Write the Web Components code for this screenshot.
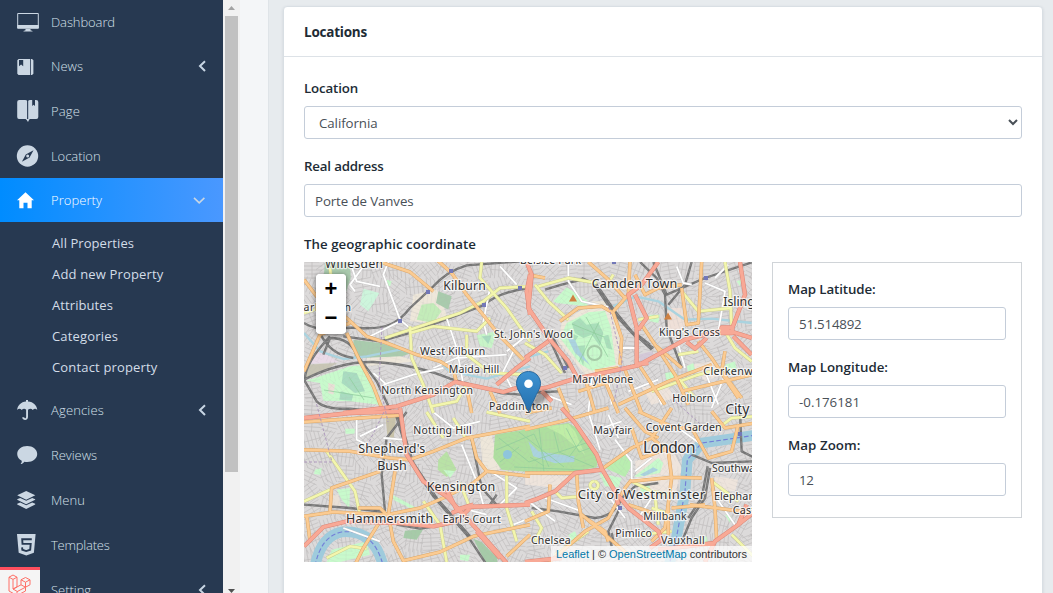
<!DOCTYPE html>
<html lang="en">
<head>
<meta charset="utf-8">
<title>Property</title>
<style>
html,body{margin:0;height:100%;overflow:hidden}
body{font:14px "Open Sans","Noto Sans",sans-serif;background:#e7ebee;color:#212b35}
</style>
</head>
<body>
<admin-app>
  <side-nav slot="nav">
    <nav-item icon="monitor" label="Dashboard" w="64" style="--h:44px"></nav-item>
    <nav-item icon="news" label="News" w="32" arrow="left" style="--h:44px"></nav-item>
    <nav-item icon="book" label="Page" w="29" style="--h:46px"></nav-item>
    <nav-item icon="compass" label="Location" w="49.5" style="--h:44px"></nav-item>
    <nav-item icon="home" label="Property" w="51" arrow="down" active style="--h:44px"></nav-item>
    <nav-sub>
      <fit-text w="82">All Properties</fit-text>
      <fit-text w="111.5">Add new Property</fit-text>
      <fit-text w="61">Attributes</fit-text>
      <fit-text w="66">Categories</fit-text>
      <fit-text w="105.5">Contact property</fit-text>
    </nav-sub>
    <nav-item icon="umbrella" label="Agencies" w="53" arrow="left"></nav-item>
    <nav-item icon="chat" label="Reviews" w="46"></nav-item>
    <nav-item icon="layers" label="Menu" w="34"></nav-item>
    <nav-item icon="html5" label="Templates" w="58.5"></nav-item>
    <nav-item icon="blank" label="Setting" w="40" arrow="left"></nav-item>
  </side-nav>
  <scroll-rail slot="rail"></scroll-rail>
  <content-card slot="main" heading="Locations">
    <form-field label="Location" lw="54" type="select" value="California" vw="58.5"></form-field>
    <form-field label="Real address" lw="79.5" value="Porte de Vanves" vw="98.5"></form-field>
    <geo-row label="The geographic coordinate">
      <city-map slot="map"></city-map>
      <form-field label="Map Latitude:" lw="87.5" value="51.514892" vw="62.5"></form-field>
      <form-field label="Map Longitude:" lw="100" value="-0.176181" vw="61"></form-field>
      <form-field label="Map Zoom:" lw="72.5" value="12" vw="14.5"></form-field>
    </geo-row>
  </content-card>
  <debug-badge slot="badge"></debug-badge>
</admin-app>
<script>
const ctx = document.createElement('canvas').getContext('2d');
/* Tracks a label so that it takes the given width. */
function track(el, text, w) {
  const c = getComputedStyle(el);
  ctx.font = `${c.fontWeight} ${c.fontSize} ${c.fontFamily}`;
  el.style.letterSpacing = ((w - ctx.measureText(text).width) / text.length).toFixed(3) + 'px';
}
function define(name, html, init) {
  customElements.define(name, class extends HTMLElement {
    constructor() {
      super();
      const t = document.createElement('template');
      t.innerHTML = html;
      this.attachShadow({mode: 'open'}).append(t.content.cloneNode(true));
    }
    connectedCallback() { if (init) init.call(this, this.shadowRoot); }
  });
}

define('fit-text', `<style>:host{display:block;white-space:nowrap;height:31px;line-height:31px;font-size:13px;font-weight:400}</style><slot></slot>`, function () {
  track(this, this.textContent, +this.getAttribute('w'));
});

define('admin-app', `<style>
:host{display:flex;height:593px;width:1053px;overflow:hidden;position:relative}
.gutter{width:29px;background:#f4f6f8;border-right:1px solid #dfe4e8;box-sizing:border-box;flex:none}
main{flex:1;padding:6px 10px 0 15px}
</style><slot name="nav"></slot><slot name="rail"></slot><div class="gutter"></div><main><slot name="main"></slot></main><slot name="badge"></slot>`);

define('side-nav', `<style>:host{display:block;width:223px;height:593px;overflow:hidden;background:#273951;flex:none}</style><slot></slot>`);
define('nav-sub', `<style>:host{display:flex;flex-direction:column;padding:6px 0 4px 52px;height:155px;color:#d3dde8}</style><slot></slot>`);

const icons = {
monitor:'<path d="M.7.5h20.6v14.6H.7z" fill="none" stroke="#cbd7e3" stroke-width="1"/><path d="M.3 12h21.4v3.500H.3zM8.500 16h5v1.200l2 .8v.5h-9v-.5l2-.8z"/>',
news:'<path d="M1.600 1H13.200v16H1.600L.3 15.700V2.300zM14 1h1l1.400 1.300v13.400L15 17h-1z"/><path d="M2 2h4.200v6.200L4.100 6.500 2 8.200z" fill="#273951"/>',
book:'<path d="M2.300 0H8q2 0 2.100 1v19q-.5-1-2-1H2Q.2 19 .2 17V2Q.2 0 2.300 0zM11.200 1q.2-1 2-1h2v6l1.400-1.300L18 6V0h1q2.300 0 2.300 2v15q0 2-2 2h-6.100q-1.500 0-2 1z"/><path d="M9 19h3.500L11 22z"/>',
compass:'<circle cx="10.500" cy="11" r="10.700"/><path d="M16.500 5.200 12.600 12.600 4.900 16.700 8.800 9.500z" fill="#273951"/><circle cx="10.700" cy="11" r="1.500"/>',
home:'<path fill="#fff" d="M8.500.2 17 8.200h-2.300v8H10.500v-5.500h-4v5.500H2.300v-8H0z"/>',
umbrella:'<path d="M9 0h2v1.500C16.500 1.800 20 5.500 20.200 10c-1.200-1.600-3-1.600-4.400 0-1.400-1.500-3-1.600-4.800-.3V17c0 4-5.600 4-5.800.3h2c.2 1.300 1.900 1.300 1.900-.3V9.700C8 8.400 6 8.500 4.700 10 3.400 8.400 1.500 8.400.2 10 .5 5.500 4 1.800 9 1.500z"/>',
chat:'<path d="M10.200 0c5.600 0 10 3.500 10 8s-4.500 8-10 8c-1 0-2-.1-2.800-.3C6 17.300 5.200 18 3.600 18c.9-1 1.300-2 1.100-3.200C2 13.300.2 11 .2 8c0-4.500 4.400-8 10-8z"/>',
layers:'<path d="M9.200 0 18.300 4.300 9.200 8.700.2 4.300zM.2 8.200l3-1.300 6 2.800 6-2.800 3 1.300v.6l-9.100 4.400L.2 8.800zM.2 12.700l3-1.300 6 2.800 6-2.800 3 1.300v.8L9.200 18 .2 13.500z"/>',
html5:'<path d="M0 0h18.600l-1.700 18.800-7.600 2.700-7.600-2.700z"/><path d="M14.800 5.200H5.200l.3 4.700h8.200l-.5 5.800-4 1.400-3.900-1.400-.2-2.400" fill="none" stroke="#273951" stroke-width="1.900"/>',
blank:''};
define('nav-item', `<style>
:host{display:grid;grid-template-columns:34px 1fr 31px;align-items:center;height:var(--h,45px);padding-left:17px;color:#d5e0ea;font-size:13px;font-weight:300}
:host([active]){background:linear-gradient(90deg,#008cff,#4a98ff);color:#fff}
svg{overflow:visible;display:block}
.i{fill:#cbd7e3}
</style><svg class="i" width="22" height="22"></svg><span></span><svg class="c" width="12" height="12" fill="none" stroke="#c8d6e4" stroke-width="2"></svg>`, function (r) {
  const n = this.getAttribute('icon'), s = r.querySelector('.i');
  const off = {monitor:2,news:3,book:0,compass:0,home:3,umbrella:1,chat:2,layers:2,html5:0,blank:0}[n];
  s.innerHTML = `<g transform="translate(0 ${off})">${icons[n]}</g>`;
  const t = r.querySelector('span');
  t.textContent = this.getAttribute('label');
  track(t, t.textContent, +this.getAttribute('w'));
  const a = this.getAttribute('arrow');
  r.querySelector('.c').innerHTML = a === 'left' ? '<path d="M13 1.300 8 6l5 5"/>' : a === 'down' ? '<path d="M2 3.800 7.200 8.800 12.400 3.800" stroke-width="1.600"/>' : '';
});

define('scroll-rail', `<style>:host{display:flex;flex-direction:column;align-items:center;width:17px;height:593px;background:#f1f1f1;flex:none;justify-content:space-between}
i{width:13px;height:456px;background:#c1c1c1}svg{display:block}</style>
<svg width="17" height="16"><path d="M5 10h7L8.500 6z" fill="#a3a3a3"/></svg><i></i><svg width="17" height="121"><path d="M5 117h7l-3.500 4z" fill="#505050"/></svg>`);

define('debug-badge', `<style>:host{position:absolute;left:0;top:567px;width:40px;height:26px;background:#f5f5f5;border-top:3px solid #ff4f5e;box-sizing:border-box}svg{display:block}</style>
<svg width="40" height="23" fill="none" stroke="#ff6f66" stroke-width="1" stroke-linejoin="round"><path d="M9 7.200 13 5l4 2.200-4 2.200zM9 7.200V21l8 4.500M13 9.400V19l4 2.300M17 7.200v9.600l-4 2.200M21 9.800 25.500 7.500 30 9.800l-4.500 2.400zM21 9.800v5l4.500 2.400 4.500-2.400v-5M25.500 12.200v5M21 14.800l-8 4.400M25.500 17.200l-8.500 4.500V25M25.500 17.200V21l-8.500 4.500"/></svg>`);

define('content-card', `<style>
:host{display:block;height:620px;background:#fff;border:1px solid #d9dfe4;border-radius:4px;box-shadow:0 1px 3px rgba(40,60,80,.12);box-sizing:border-box;width:760px;margin-left:-1px}
header{height:49px;border-bottom:1px solid #dde2e7;display:flex;align-items:center;padding:0 20px 0;font-weight:700;font-size:13.500px}
section{padding:22px 20px}
</style><header><span></span></header><section><slot></slot></section>`, function (r) {
  const t = r.querySelector('span');
  t.textContent = this.getAttribute('heading');
  track(t, t.textContent, 63);
});

define('form-field', `<style>
:host{display:block;height:78px}
label{display:flex;align-items:center;height:17px;padding-bottom:2px;font-weight:600;font-size:13.300px;margin-bottom:8px}
input,select{display:block;width:100%;height:33px;box-sizing:border-box;border:1px solid #c4cdd9;border-radius:3px;padding:0 10px;background:#fff;color:#495057;font:13.300px "Open Sans","Noto Sans",sans-serif;outline:0;margin:0}
</style><label></label>`, function (r) {
  const l = r.querySelector('label'), v = this.getAttribute('value');
  l.textContent = this.getAttribute('label');
  track(l, l.textContent, +this.getAttribute('lw'));
  const sel = this.getAttribute('type') === 'select', f = document.createElement(sel ? 'select' : 'input');
  if (sel) f.innerHTML = `<option>${v}</option>`; else f.value = v;
  f.setAttribute('aria-label', l.textContent);
  r.append(f);
  track(f, v, +this.getAttribute('vw'));
});

define('geo-row', `<style>
:host{display:block}
h4{margin:0 0 8px;height:19px;line-height:19px;font-size:13.300px;font-weight:600}
.row{display:grid;grid-template-columns:448px 250px;gap:20px;align-items:start}
.box{border:1px solid #d0d4d8;height:256px;box-sizing:border-box;padding:17px 15px 0}
</style><h4><span></span></h4><div class="row"><slot name="map"></slot><div class="box"><slot></slot></div></div>`, function (r) {
  const t = r.querySelector('span');
  t.textContent = this.getAttribute('label');
  track(t, t.textContent, 172);
});

/* Map data: every sheet is one quarter of the map, drawn at three units per pixel. */
const sheets = [[-4,-4],[221,-4],[-4,146],[221,146]];
const areas = [
 [['#a9cbad','M75 12H150L152 60 130 125 100 120 70 70z'],['#cdf5dc','M190 92 238 105 205 160 180 140z'],['#eee7da','M340 110 410 95 440 170 400 195 330 190z'],['#c3ecb9','M365 140 400 135 425 160 400 195 350 185z'],['#a9cbad','M415 100 455 115 445 155 408 135z'],['#a9cbad','M160 245 240 255 335 285 300 297 165 300z'],
  ['#eadbe8','M55 275 115 312 20 318z'],['#c8c5b5','M20 320 112 315 60 345 18 360z'],['#c8facc','M20 368 150 325 185 322 232 400 238 440 150 430 70 428 60 375z'],['#a9dcc0','M130 340 170 345 195 400 165 405 125 375z'],['#c8f5c8','M530 232 590 220 575 270 540 265z'],['#a9dcc0','M545 235 575 232 565 258z'],['#eee7da','M200 300 300 295 350 310 200 325z'],['#c8facc','M260 65 275 70 270 85 258 80z'],['#e9e0d6','M85 375 105 380 100 410 85 405z'],['#a9dcc0','M122 400 160 410 155 428 118 425z']],
 [['#eee7da','M230 150 270 165 290 240 280 335 180 350 100 250 110 195 170 155z'],['#c8facc','M125 195 190 163 240 158 258 210 272 320 200 338 165 318 105 240z'],['#a9dfba','M140 195 165 180 185 200 220 195 235 225 225 265 200 230 175 240 150 225z'],['#a9dfba','M150 265 180 262 175 325zM235 235 250 230 262 275 245 270zM135 225 160 235 150 250z'],['#aad3df','M125 235 150 245 165 280 195 322 150 285z'],['#c8facc','M85 130 125 88 190 130 185 145 95 135z'],['#eee7da','M200 130 240 130 250 145 210 145z'],['#efe0d8','M430 150 470 150 480 200 440 240 425 200z'],['#c8facc','M420 345 450 340 445 370 425 375z'],['#c8facc','M375 170 405 170 400 195 375 190z'],['#d4c9d8','M340 290 380 280 395 300 350 320z'],['#c8facc','M600 320 630 310 635 335 610 345z'],['#eee4dc','M500 320 560 310 590 350 540 370z'],['#c8facc','M485 325 505 315 510 335 490 340zM635 70 648 65 645 85z'],['#eee4dc','M350 390 420 370 450 420 380 440z']],
 [['#c9c3a9','M255 12H290L280 100 262 80z'],['#b9e2a6','M415 155 440 130 470 185 440 207 413 185z'],['#c8facc','M430 185 465 190 450 210z'],['#eee7da','M540 85 575 80 600 185 550 190z'],['#aedf9f','M585 80 690 62V192L605 185 580 150z'],['#a6cba8','M520 392 545 402 592 450V462H555z'],['#c8facc','M110 245 150 240 148 300 125 275z'],['#a6cba8','M315 368 370 363 350 395 310 390z'],['#c8facc','M280 262 350 300 345 308 280 275z'],['#c8facc','M135 62 165 62 163 77 137 77z'],['#e9e0d6','M90 265 115 260 125 300 90 300z'],['#c8facc','M45 185 65 180 62 200 42 198z'],['#f0c8c8','M60 385 100 375 90 400z'],['#c8facc','M95 425 200 400 210 440 120 462H80z'],['#c8facc','M480 440 510 440 505 460 480 455z']],
 [['#aedf9f','M0 65 130 45 160 62 218 150 215 178 150 190 0 190z'],['#bfeea6','M60 55 130 48 150 70 180 140 110 80z'],['#aad3df','M10 100 40 130 90 138 148 145V162L90 166 25 145z'],['#b9eeb0','M240 180 300 138 322 170 300 207z'],['#c8facc','M222 195 290 210 280 238 240 235z'],['#c8facc','M328 205 400 150 415 165 405 195 340 207z'],['#aad3df','M355 198 395 182 400 190 360 205z'],['#eee4dc','M330 160 440 120 470 180 450 260 340 260z'],['#eee4dc','M0 200 140 205 110 240 0 230z'],['#c8facc','M345 230 375 228 372 260 348 255z'],['#c8facc','M130 380 150 370 160 395 140 400z'],['#c8facc','M510 395 545 385 550 412 520 415z'],['#c8facc','M600 320 620 325 615 345z'],['#eee4dc','M570 205 640 215 630 250 570 245z'],['#c8facc','M328 205 400 150 415 165 405 195 340 207z'],['#aad3df','M345 200 385 178 400 186 358 205z']]
];
const roads = {
 water:['M12 225 60 280 130 303 200 295 300 275 420 310 450 340 560 362 690 325','M0 300 70 280M265 145 330 115 400 130 480 185 560 182 680 195','',''],
 river:['','','M45 475Q62 385 125 372 222 362 250 475','M430 480 455 385 480 250 487 155 530 105 600 95 700 80'],
 rail:['M12 195C60 225 100 205 180 210 260 215 295 195 330 150L400 85Q440 40 500 22L690 8M130 235 240 250 330 225 550 142Q600 100 690 90M12 365Q120 310 220 312 350 320 450 362L600 405 690 412M90 240Q150 240 170 290L230 370 275 465M90 235Q10 320 15 370L50 430Q75 455 150 452L230 460M60 225Q90 290 160 300M90 240 70 290','M170 60 215 80 270 160 320 220 380 275M205 75 265 165 340 245M345 12 395 60 420 110 425 210 470 330M500 12 480 80 430 140M385 12 425 110 540 60 690 10M70 235 120 345M80 230 130 330M60 95 110 80 170 65M330 225 375 260M340 240 385 270M0 405 100 400','M12 290 150 300 255 312M255 310 245 200 260 90 320 12M285 12 330 160 400 265 500 380 560 470M292 12 340 165 410 270 510 385M290 350 360 362 440 350M515 95 545 240 590 290M590 260 570 290 600 290','M555 180 540 270 500 330 475 390M548 175 530 270 490 330M500 140 560 165 690 160M645 12 650 130 690 150M285 300 250 370 260 415M20 300 100 310 210 330Q270 325 290 270L330 235 400 225M260 375 265 400'],
 white:['M265 12 250 50 300 185 335 215M300 190 200 240M150 12 170 70 240 85M440 180 470 270 490 380M570 90 550 190 560 230M600 25 650 80M250 380 340 350 430 330M200 12 150 80 165 100M400 330 470 300 620 290M620 280 690 225M260 380 220 345M640 280 610 340 640 400','M130 12 130 70 170 130 250 147M540 75 600 100 580 220M290 270H335M455 25 475 75 500 80M380 370 410 440M200 360 190 465M60 410 140 440M540 340 580 440M460 260 480 330M610 20 570 60M250 360 260 440M310 400 400 365M600 350 560 450','M170 30V95L200 110M180 85 250 50M485 110 530 220 550 290M250 90 310 95M400 12 460 60 540 40M485 300 560 320M130 360 240 400M640 350 690 330M570 190 650 240 600 290','M190 12 225 125M270 95 320 160 320 215 430 205M60 270 170 310M380 150 330 190M560 250 630 350M10 280 90 340M460 60 530 110M340 330 380 270M240 250 300 330M230 60 290 40M250 20 280 90'],
 yellow:['M255 240 330 215 480 165 550 130 600 90 690 85M545 12 540 60 575 100 620 150 690 250M330 205 335 300 370 380 400 465M330 225 400 205 530 220 570 180M12 165 60 150 100 115 90 30M500 230 500 290 570 345 690 350M395 445 470 430 500 380','M40 85 130 60 215 75M30 80 70 130 130 185M0 255 60 290 110 345M265 50 240 90M600 12 615 100 620 210M380 400 520 350 600 330M340 185 400 175M470 100 520 160 620 150M600 220 630 270 680 310M450 350 510 420M460 290 520 280','M80 130 130 200 165 250 180 320M12 280 90 245M370 280 420 350 440 462M480 225 510 300M620 190 620 300 650 400M80 450 150 415 200 422M380 12 430 90M460 30 500 95M560 12 690 40','M90 250 110 270 170 265M207 220A12 12 0 1 0 208 220M320 220 380 250 440 260M350 380 440 370M20 310 50 360 30 400M90 440 190 370M560 220 640 280M380 300 440 320M390 265 400 350M580 60 620 30 690 25M620 380 690 450'],
 orange:['M12 65 50 115 140 180 200 235 260 255 350 290 420 310 460 335 470 375M220 5 330 42 400 100M410 5 455 45 500 110 545 165 600 235 670 305M140 225 180 310 220 385 245 450M12 340 60 230 150 195M500 390 515 465M570 400 600 465','M105 190 160 150 230 145 265 165 290 240 285 320M190 12 245 60 300 120M265 160 310 110 315 12M330 50 360 110 400 90 470 80M350 200 390 260 450 350 490 440M470 90 485 200 520 195 530 12M520 250 560 300 640 420M230 345 280 465M300 335 350 465M345 325 420 440M280 440 430 370 560 320M160 400 290 360M180 360 210 465M395 265 470 330M470 400 680 350M100 390 130 465M600 280 590 340 650 420M210 340 280 330M10 50 60 60','M12 125 150 130 270 150 330 155 400 130 500 90 690 55M12 325 100 312 260 320 360 300 430 270 520 225 560 190 690 205M285 190 265 320 280 400 310 458 420 432 520 385 690 350M90 310 95 240 240 190M515 90 530 150 560 190M175 300H240L260 320M240 340 190 420 165 470M20 320 30 400M12 42 300 22M620 445 690 380','M0 65 110 40 250 0M0 195H150M155 195 160 280 175 360M175 325 240 370 250 400M235 180 320 120 380 90 440 0M380 90 430 130 440 210 420 360 380 400M320 220 440 208 530 210M320 215 300 240 250 330 180 370 70 465M300 0 360 70 400 90M560 210 570 300 575 400M500 60 550 150 620 130 640 50M495 290 690 315M440 300 540 290M0 340 70 310 75 230M560 10 600 60 690 45M320 60 350 150 420 125M430 380 430 290M0 15 80 0M340 10 450 60 520 60M170 320 310 440M310 290 430 330'],
 red:['M130 465 290 445 400 410 465 372 530 385 610 402 690 378M690 170 680 100 690 50M690 300 650 330 590 380','M5 12 20 50 10 150 75 245 130 310 165 375M0 300 70 250M0 395 60 390 140 365 340 322 480 245 600 215 680 240M400 12 350 80 310 110 335 210 335 320M330 110 365 180 340 215M620 215 660 110 645 12M625 235 680 290M590 208H622V225H590zM485 252 510 272 545 240M50 400 80 430M340 318 370 315','M12 30 150 15 300 10M300 0 320 140 370 220 440 265 500 330 545 380 620 465M440 245 470 305 520 290M455 315 500 297 690 290M12 415 70 357 140 340 300 345 400 355 470 340 510 300M530 370 600 450','M110 0 150 45 215 140 232 185 150 195 90 250 30 275 0 285M232 185 270 250 310 300 400 370 410 395 375 420M540 462 570 400 640 350 690 310M280 290 270 250M0 462 110 450M400 425 570 405M665 290 640 350']
};
const labels = [['Willesden',325,268,58,12],['Kilburn',443.300,290,42.500,12.200],['Camden Town',591.700,288,85.600,12.500],['Islington',723.300,306,51,12.500],["St. John's Wood",494,338,79,10.500],["King's Cross",659,335.500,61,10.800],['West Kilburn',420,355,65.300,10.500],['Maida Hill',448.700,373,50.600,10.500],['Marylebone',572.300,382.500,61,10.700],['North Kensington',381.300,393.700,91.700,10.500],['Clerkenwell',703.300,374.700,62,10.800],['Holborn',672.300,401.700,41,10.600],['Paddington',489,409.500,60,10.500],['City',725.300,414,24,14],['Harlesden',295,311,56,10.500],['Belsize Park',520,264,61,10.500],['Notting Hill',413.300,434,58.400,10.500],["Shepherd's",358.300,453.200,67,12.500],['Bush',377.300,469.700,29.400,12.500],['Kensington',426.700,491,68.600,12.500],['Hammersmith',346,523.300,87.300,12.500],["Earl's Court",442.700,523,58,10.500],['Mayfair',593.300,434,38.400,10.700],['Covent Garden',645.700,430.500,76,10.800],['London',643,453,52.500,15.500],['Southwark',712,471.700,53,10.800],['City of Westminster',577.700,499.300,127.500,13],['Elephant',714,499.700,45,10.800],['Castle',732.700,514,32,10.800],['Millbank',643.300,520.300,43.400,10.600],['Pimlico',615.300,536.700,36.700,10.600],['Vauxhall',661,543.700,43.700,10.600],['Chelsea',531,543.700,39.700,10.600]];

function streets() {
  let seed = 17, d = '';
  const rnd = () => (seed = seed * 16807 % 2147483647) / 2147483647;
  for (let y = 8; y < 310; y += 17) for (let x = 8; x < 460; x += 17) {
    const a = rnd() * 3.14, c = Math.cos(a), s = Math.sin(a);
    for (let k = -2; k <= 2; k++) {
      const o = k * 4, l = 6 + rnd() * 5;
      d += `M${(x - l*c - o*s).toFixed(1)} ${(y - l*s + o*c).toFixed(1)}L${(x + l*c - o*s).toFixed(1)} ${(y + l*s + o*c).toFixed(1)}`;
    }
    d += `M${(x + 9*s).toFixed(1)} ${(y - 9*c).toFixed(1)}L${(x - 9*s).toFixed(1)} ${(y + 9*c).toFixed(1)}`;
  }
  return d;
}
function layer(list, attrs) {
  return list.map((d, i) => d ? `<path transform="translate(${sheets[i]}) scale(.33333)" d="${d}" fill="none" stroke-linejoin="round" ${attrs}/>` : '').join('');
}
function drawMap() {
  const net = streets();
  let s = '<rect width="448" height="300" fill="#dcdada"/>';
  s += `<path d="${net}" stroke="#c2c0c0" stroke-width=".6" fill="none"/>`;
  s += areas.map((l, i) => `<g transform="translate(${sheets[i]}) scale(.33333)">${l.map(a => `<path fill="${a[0]}" d="${a[1]}"/>`).join('')}</g>`).join('');
  s += `<path d="${net}" stroke="#b5b5b0" stroke-opacity=".22" stroke-width=".6" fill="none"/>`;
  s += layer(roads.water, 'stroke="#aad3df" stroke-width="7"');
  s += layer(roads.river, 'stroke="#9fcbdc" stroke-width="32"');
  s += layer(roads.river, 'stroke="#7480d8" stroke-width="3.500" stroke-dasharray="14 7"');
  s += '<g fill="none" stroke="#8ecb9b" stroke-width=".7"><path d="M195 176 225 200 285 180M210 205 280 208M215 170 260 205M235 165 240 210M192 188 230 172 245 205M250 170 255 190 290 205M262 166 275 190 286 186M265 195 280 175M196 200 215 185M226 195 240 204M20 128 70 136M45 115 60 138M268 62 300 75M275 100 295 60M282 55 304 95"/><circle cx="290.500" cy="91" r="7" stroke="#a6cba8" stroke-width="2"/></g><circle cx="203.500" cy="192.500" r="4.500" fill="#8fc5dc"/>';
  s += layer(roads.rail, 'stroke="#757575" stroke-width="7"');
  s += layer(roads.rail, 'stroke="#a8a8a8" stroke-width="1.300" stroke-dasharray="12 10"');
  s += layer(roads.white, 'stroke="#bdbdbd" stroke-width="7"') + layer(roads.white, 'stroke="#fff" stroke-width="5.500"');
  s += layer(roads.yellow, 'stroke="#c9cb8c" stroke-width="10"') + layer(roads.yellow, 'stroke="#f3f6ad" stroke-width="7.500"');
  s += layer(roads.orange, 'stroke="#dda767" stroke-width="10.500"') + layer(roads.orange, 'stroke="#fbcb92" stroke-width="7.500"');
  s += layer(roads.red, 'stroke="#dd8575" stroke-width="13"') + layer(roads.red, 'stroke="#f8a996" stroke-width="10"');
  s += '<path d="M78 65 75 120 84 160M80 150 60 190M305 45 318 100 310 140M0 200H28L12 140M372 140 405 170" fill="none" stroke="#aa94bb" stroke-width=".9" stroke-dasharray="3 2"/>';
  s += '<g fill="#7378b8">' + [[147,9],[124,30],[96,59],[180,43],[216,26],[402,16],[261,106],[316,246],[436,172],[310,0]].map(p => `<rect x="${p[0]-2}" y="${p[1]-2}" width="4" height="4"/>`).join('') + '</g>';
  s += '<path d="M265 39.500 269 32.500 273 39.500zM360 57.500 364 50.500 368 57.500z" fill="#cf8142"/>';
  s += '<g transform="translate(-304 -262)" font-family="Noto Sans,sans-serif" fill="#303030" stroke="#fff" stroke-opacity=".72" stroke-width="2.400" paint-order="stroke" stroke-linejoin="round">' + labels.map(l => `<text x="${l[1]}" y="${l[2]}" textLength="${l[3]}" font-size="${l[4]}">${l[0]}</text>`).join('') + '</g>';
  s += '<defs><linearGradient id="pin" x2="0" y2="1"><stop stop-color="#3f93d2"/><stop offset="1" stop-color="#236fad"/></linearGradient><filter id="soft" x="-50%" y="-50%" width="200%" height="200%"><feGaussianBlur stdDeviation="1.600"/></filter></defs>';
  s += '<path d="M225 150 231 134Q238 126 244 129 247 134 238 140z" opacity=".28" filter="url(#soft)"/>';
  s += '<path transform="translate(212 109)" d="M12.500.5C5.800.5.5 5.800.5 12.500c0 4 2.300 7.500 4.300 11.200L12.500 40.500l7.700-16.800c2-3.700 4.300-7.200 4.300-11.200C24.500 5.800 19.200.5 12.500.5z" fill="url(#pin)" stroke="#2b6a9f"/><circle cx="224.500" cy="121.800" r="4.300" fill="#fff"/>';
  return s;
}
define('map-zoom', `<style>
:host{position:absolute;left:12px;top:12px;width:30px;height:60px;border-radius:4px;box-shadow:0 1px 5px rgba(0,0,0,.55);background:#fff;overflow:hidden}
button{display:block;width:30px;height:29px;padding:0;border:0;background:#fff;color:#000;font:700 22px/29px "Liberation Sans",sans-serif}
button:first-child{border-bottom:1px solid #ccc;height:31px}
</style><button>+</button><button>−</button>`);
define('city-map', `<style>
:host{display:block;position:relative;width:448px;height:300px;overflow:hidden}
svg{display:block}
footer{position:absolute;right:0;bottom:0;height:16px;width:196px;padding-left:5px;background:rgba(255,255,255,.72);font:11px/16px "Liberation Sans",sans-serif;color:#333;white-space:nowrap}
a{color:#0078a8}
</style><svg width="448" height="300"></svg><map-zoom></map-zoom><footer><span><a>Leaflet</a> | © <a>OpenStreetMap</a> contributors</span></footer>`, function (r) {
  r.querySelector('svg').innerHTML = drawMap();
  const t = r.querySelector('span');
  track(t, t.textContent, 191);
});
</script>
</body>
</html>
